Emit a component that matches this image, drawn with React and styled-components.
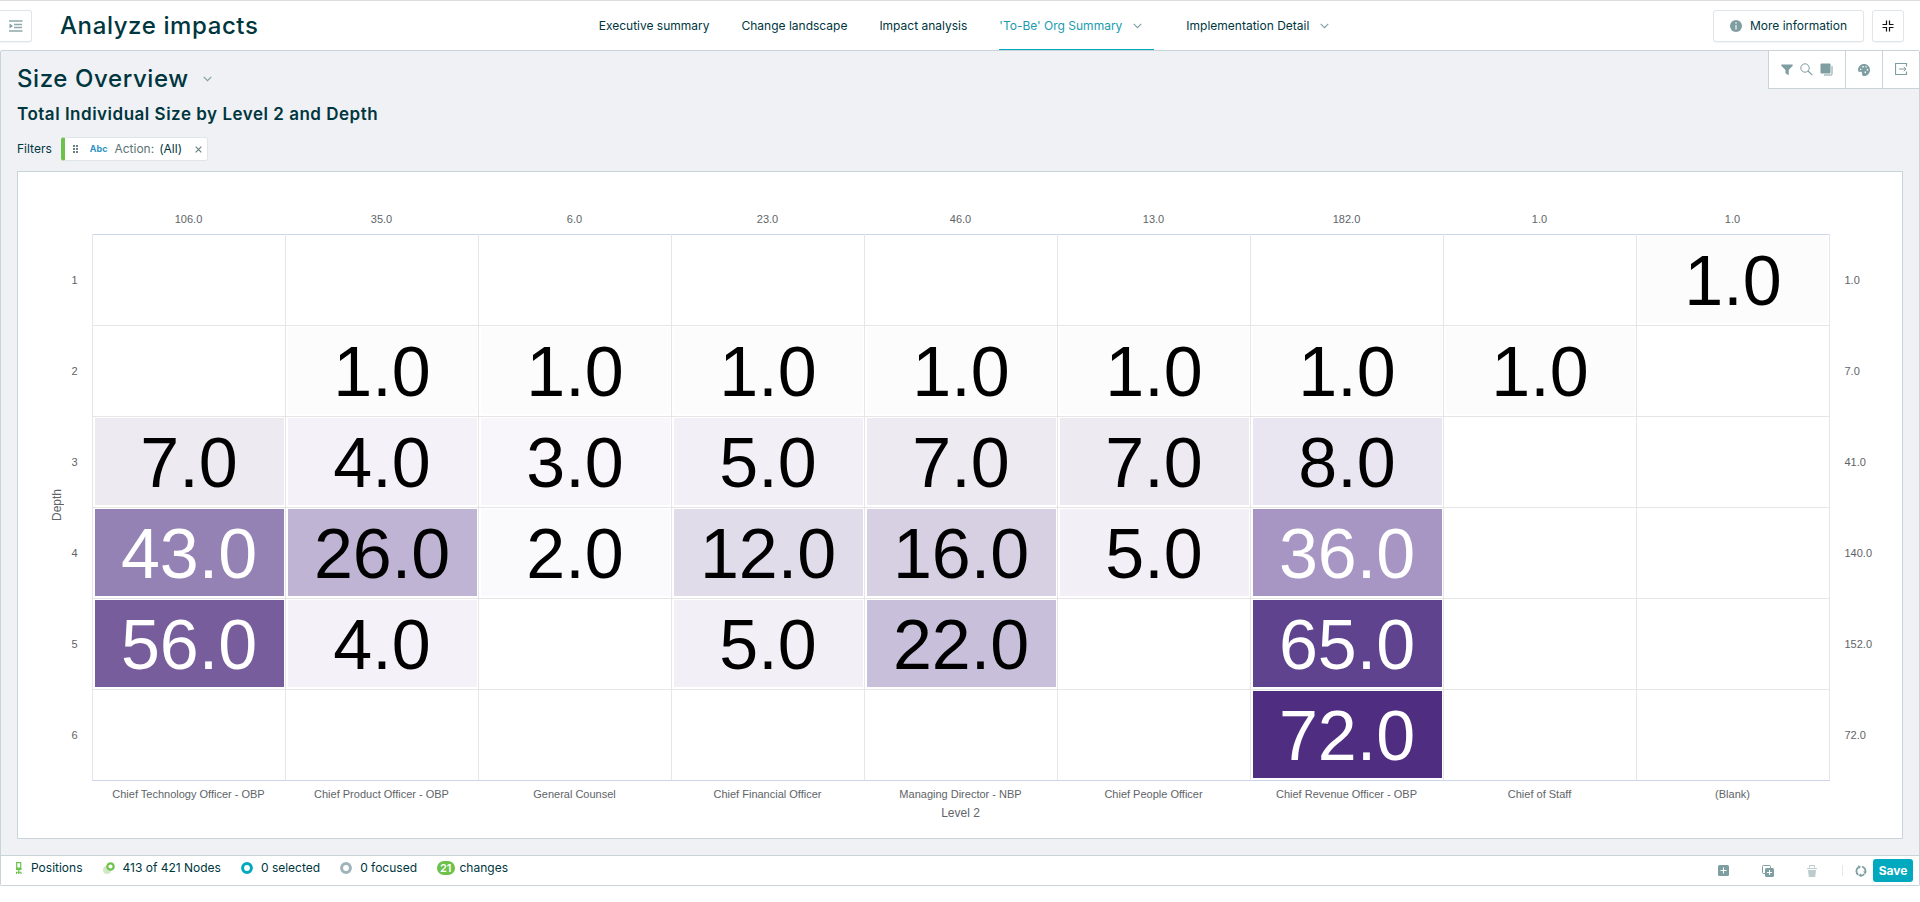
import React from "react";
import styled, { createGlobalStyle } from "styled-components";

const GlobalStyle = createGlobalStyle`
  *, *::before, *::after { box-sizing: border-box; }
  body {
    margin: 0;
    background: #fff;
    color: #00363e;
    font: 400 12px/20px Inter, "Liberation Sans", sans-serif;
  }
  h1, h2, h3, p, ul { margin: 0; padding: 0; }
  button { font: inherit; color: inherit; cursor: pointer; }
`;

const LINE = "#c8d4da";
const ICON = "#7e9ea1";
const TEAL = "#00a9bd";
const GREEN = "#6cc24a";

/* ---------- header ---------- */

const Header = styled.header`
  display: flex;
  align-items: stretch;
  height: 50px;
  padding-right: 16px;
  border-top: 1px solid #dcdcdc;
`;

const HeaderSide = styled.div`
  flex: 1 1 0;
  display: flex;
  align-items: center;
  justify-content: ${(p) => (p.$end ? "flex-end" : "flex-start")};
  gap: ${(p) => (p.$end ? 8 : 28)}px;
`;

const OutlineButton = styled.button`
  display: inline-flex;
  align-items: center;
  justify-content: center;
  gap: 8px;
  height: 32px;
  min-width: 32px;
  padding: ${(p) => (p.$wide ? "0 16px" : "0")};
  background: #fff;
  border: 1px solid #dfe5e8;
  border-radius: 3px;
  box-shadow: 0 1px 1px rgba(0, 40, 50, 0.05);
`;

const MenuToggle = styled(OutlineButton)`
  border-left: 0;
  border-radius: 0 3px 3px 0;
`;

const PageTitle = styled.h1`
  font-size: 24px;
  font-weight: 500;
  line-height: 32px;
  letter-spacing: 0.025em;
  white-space: nowrap;
`;

const Nav = styled.nav`
  display: flex;
  gap: 32px;
  margin-left: 36px;
`;

const NavLink = styled.a`
  display: flex;
  align-items: center;
  gap: 11px;
  padding-top: 2px;
  padding-right: ${(p) => (p.$menu ? 12 : 0)}px;
  border-bottom: 1px solid ${(p) => (p.$active ? TEAL : "transparent")};
  color: ${(p) => (p.$active ? "#1a9bb0" : "inherit")};
  text-decoration: none;
  white-space: nowrap;
`;

/* ---------- workspace ---------- */

const Workspace = styled.main`
  border: 1px solid ${LINE};
  border-radius: 2px;
  background: #f0f1f5;
  box-shadow: 0 1px 0 #e9edf0;
`;

const Top = styled.div`
  display: flex;
  justify-content: space-between;
  align-items: flex-start;
`;

const Headings = styled.div`
  padding: 12px 0 10px 16px;
`;

const ViewTitle = styled.h2`
  display: flex;
  align-items: center;
  gap: 14px;
  font-size: 24px;
  font-weight: 500;
  line-height: 32px;
  letter-spacing: 0.025em;
`;

const PlainButton = styled.button`
  display: inline-flex;
  align-items: center;
  justify-content: center;
  padding: 0;
  border: 0;
  background: none;
`;

const ChartTitle = styled.h3`
  margin-top: 7px;
  font-size: 17px;
  font-weight: 600;
  line-height: 24px;
  letter-spacing: 0.03em;
`;

const Filters = styled.div`
  display: flex;
  align-items: center;
  gap: 9px;
  margin-top: 11px;
`;

const Chip = styled.div`
  display: flex;
  align-items: center;
  height: 24px;
  padding: 0 5px 0 8px;
  background: #fff;
  border: 1px solid #dfe5e8;
  border-left: 4px solid ${GREEN};
  border-radius: 3px;
`;

const ChipType = styled.span`
  margin: 0 7px 0 11px;
  color: #2f93c4;
  font-size: 9px;
  font-weight: 700;
`;

const ChipName = styled.span`
  margin-right: 5px;
  color: #5c7376;
`;

const ChipValue = styled.span`
  margin-right: 13px;
`;

const Tools = styled.div`
  display: flex;
  background: #fff;
  border: solid ${LINE};
  border-width: 0 0 1px 1px;
`;

const ToolGroup = styled.div`
  display: flex;
  align-items: center;
  justify-content: center;
  gap: 7px;
  height: 37px;
  min-width: 37px;
  padding: 0 ${(p) => (p.$wide ? 12 : 0)}px;
  & + & { border-left: 1px solid ${LINE}; }
`;

/* ---------- chart ---------- */

const Card = styled.section`
  margin: 0 16px;
  padding: 34px 0 18px 29px;
  background: #fff;
  border: 1px solid ${LINE};
`;

const Matrix = styled.table`
  width: 100%;
  table-layout: fixed;
  border-collapse: collapse;
  color: #606468;
  font: 400 11px/14px "Liberation Sans", Arial, sans-serif;

  th, td { padding: 0; font-weight: 400; }
`;

const Col = styled.col`
  width: ${(p) => p.$w}px;
`;

const ColumnTotal = styled.td`
  height: 28px;
  && { padding-bottom: 2px; }
  text-align: center;
`;

const ColumnLabel = styled.th`
  height: 26px;
  && { padding-top: 2px; }
  text-align: center;
  white-space: nowrap;
`;

const DepthAxis = styled.th`
  vertical-align: middle;

  span {
    display: inline-block;
    writing-mode: vertical-rl;
    transform: rotate(180deg);
    font-size: 12px;
  }
`;

const LevelAxis = styled.td`
  font-size: 12px;
  text-align: center;
  vertical-align: top;
`;

const RowLabel = styled.th`
  && { padding-right: 14px; }
  text-align: right;
`;

const RowTotal = styled.td`
  && { padding-left: 15px; }
`;

const BodyRow = styled.tr`
  height: 91px;
  &:first-child td[data-cell] { border-top-color: #ccd6eb; }
  &:last-child td[data-cell] { border-bottom-color: #ccd6eb; }
`;

const Cell = styled.td`
  border: 1px solid #e6e6e6;
  && { padding: 1px 1px 2px 2px; }
`;

const Tile = styled.div`
  height: 87px;
  background: ${(p) => p.$fill};
  color: ${(p) => (p.$light ? "#fff" : "#000")};
  font-size: 70px;
  line-height: 90px;
  text-align: center;
`;

const columns = [
  ["Chief Technology Officer - OBP", "106.0"],
  ["Chief Product Officer - OBP", "35.0"],
  ["General Counsel", "6.0"],
  ["Chief Financial Officer", "23.0"],
  ["Managing Director - NBP", "46.0"],
  ["Chief People Officer", "13.0"],
  ["Chief Revenue Officer - OBP", "182.0"],
  ["Chief of Staff", "1.0"],
  ["(Blank)", "1.0"],
];

const rows = [
  { depth: 1, total: "1.0", values: [0, 0, 0, 0, 0, 0, 0, 0, 1] },
  { depth: 2, total: "7.0", values: [0, 1, 1, 1, 1, 1, 1, 1, 0] },
  { depth: 3, total: "41.0", values: [7, 4, 3, 5, 7, 7, 8, 0, 0] },
  { depth: 4, total: "140.0", values: [43, 26, 2, 12, 16, 5, 36, 0, 0] },
  { depth: 5, total: "152.0", values: [56, 4, 0, 5, 22, 0, 65, 0, 0] },
  { depth: 6, total: "72.0", values: [0, 0, 0, 0, 0, 0, 72, 0, 0] },
];

const fills = {
  1: "#fcfcfc", 2: "#fafafc", 3: "#f8f6fb", 4: "#f4f2f8", 5: "#f2f0f6",
  7: "#edeaf2", 8: "#eae6f1", 12: "#e1dcea", 16: "#d7d0e3", 22: "#c8c0da",
  26: "#bfb4d3", 36: "#a796c3", 43: "#9582b5", 56: "#785d9d", 65: "#5f438f",
  72: "#4f2e82",
};

/* ---------- footer ---------- */

const StatusBar = styled.footer`
  display: flex;
  justify-content: space-between;
  align-items: center;
  height: 30px;
  margin-top: 16px;
  padding: 0 6px 0 14px;
  background: #fff;
  border-top: 1px solid ${LINE};
`;

const StatusList = styled.ul`
  display: flex;
  gap: 20px;
  padding-bottom: 5px;
  list-style: none;
`;

const Status = styled.li`
  display: flex;
  align-items: center;
  gap: ${(p) => p.$gap || 8}px;
`;

const Count = styled.span`
  padding: 0 3px;
  border-radius: 8px;
  background: ${GREEN};
  color: #fff;
  font-size: 11px;
  font-weight: 600;
  line-height: 14px;
`;

const Actions = styled.div`
  display: flex;
  align-items: center;
  gap: 33px;
`;

const SaveGroup = styled.div`
  display: flex;
  align-items: center;
  gap: 6px;
  margin-left: -8px;
  padding-left: 13px;
  background: linear-gradient(#e3e8eb, #e3e8eb) left center / 1px 11px no-repeat;
`;

const SaveButton = styled.button`
  width: 40px;
  height: 23px;
  padding: 0;
  border: 0;
  border-radius: 3px;
  background: ${TEAL};
  color: #fff;
  font-weight: 700;
`;

/* ---------- icons ---------- */

const Svg = ({ w = 12, h = w, children }) => (
  <svg width={w} height={h} viewBox={`0 0 ${w} ${h}`} fill="none" aria-hidden="true">
    {children}
  </svg>
);

const Chevron = () => (
  <Svg w={9} h={6}>
    <path d="M.7 .8 4.5 4.7 8.3 .8" stroke={ICON} strokeWidth="1.1" />
  </Svg>
);

const IndentIcon = () => (
  <Svg w={14} h={12}>
    <path d="M0 1h13.500M5 4.500h8M5 7.500h8M0 11h13.500" stroke="#8fa9ab" strokeWidth="1.300" />
    <path d="M.5 3.500v5L4 6z" fill={ICON} />
  </Svg>
);

const InfoIcon = () => (
  <Svg>
    <circle cx="6" cy="6" r="6" fill={ICON} />
    <path d="M5.200 2.300h1.600v1.500H5.200zM5.200 5h1.600v4.500H5.200z" fill="#d6e1e2" />
  </Svg>
);

const CompressIcon = () => (
  <Svg>
    <path d="M4.500 .5v4h-4M7.500 .5v4h4M4.500 11.500v-4h-4M7.500 11.500v-4h4" stroke="#111" strokeWidth="1.200" />
  </Svg>
);

const FilterIcon = () => (
  <Svg w={12}>
    <path d="M.3 .5h11.400v1.200L7.700 6v5.200L4.500 9.300V6L.3 1.700z" fill={ICON} />
  </Svg>
);

const SearchIcon = () => (
  <Svg w={13}>
    <circle cx="5" cy="5" r="4.200" stroke={ICON} />
    <path d="m8 8 4.300 4.200" stroke={ICON} strokeWidth="1.100" />
  </Svg>
);

const LayersIcon = () => (
  <Svg w={13}>
    <rect x=".5" y=".5" width="10" height="10" rx="1" fill={ICON} />
    <path d="M12 3v8.200a.8.8 0 0 1-.8.8H4" stroke={ICON} />
  </Svg>
);

const PaletteIcon = () => (
  <Svg w={12}>
    <path d="M6 .1C2.700 .1 0 2.800 0 6c0 1.500 1 2.100 2.200 1.800 1.300-.3 2 .3 1.800 1.600C3.900 11 4.700 12 6.200 12 9.400 12 12 9.300 12 6S9.300 .1 6 .1z" fill={ICON} />
    <path d="M2 4.700h1.300V6H2zM4.300 2h1.400v1.400H4.300zM7.400 2.200h1.400v1.400H7.400zM8.800 5h1.400v1.400H8.800zM6.600 7.600H8V9H6.600z" fill="#fff" />
  </Svg>
);

const ExportIcon = () => (
  <Svg w={13}>
    <path d="M11.500 3.500v-3H.5v11h11v-3" stroke={ICON} strokeWidth="1.200" />
    <path d="M4 6h7M8.800 3.800 11 6 8.800 8.200" stroke={ICON} />
  </Svg>
);

const GripIcon = () => (
  <Svg w={6} h={8}>
    <path d="M0 0h2v2H0zM3 0h2v2H3zM0 3h2v2H0zM3 3h2v2H3zM0 6h2v2H0zM3 6h2v2H3z" fill="#6d8083" />
  </Svg>
);

const CloseIcon = () => (
  <Svg w={7}>
    <path d="m.7 .7 5.600 5.600M6.300 .7.7 6.300" stroke="#6b8386" strokeWidth="1.200" />
  </Svg>
);

const SeatIcon = () => (
  <Svg w={8} h={12}>
    <path d="M1.700 .6h4v5.400h-4z" stroke={GREEN} strokeWidth="1.200" />
    <path d="M1 6h5.500v2H1zM3.200 8h1.200v4H3.200zM1 9.700h5.500v1H1zM1 10.500h1V12H1zM5.500 10.500h1V12h-1z" fill={GREEN} />
  </Svg>
);

const NodesIcon = () => (
  <Svg w={12}>
    <circle cx="4" cy="8" r="4" fill="#cfe9c4" />
    <circle cx="7.500" cy="4.500" r="3.200" fill="#fff" stroke={GREEN} strokeWidth="2.200" />
  </Svg>
);

const Ring = ({ color }) => (
  <Svg w={12}>
    <circle cx="6" cy="6" r="4.400" stroke={color} strokeWidth="3" />
  </Svg>
);

const AddIcon = () => (
  <Svg w={11}>
    <rect width="11" height="11" rx="1.500" fill={ICON} />
    <path d="M5.500 2.500v6M2.500 5.500h6" stroke="#fff" />
  </Svg>
);

const DuplicateIcon = () => (
  <Svg w={12}>
    <path d="M3 8.500H1.500a1 1 0 0 1-1-1v-6a1 1 0 0 1 1-1h6a1 1 0 0 1 1 1V3" stroke={ICON} />
    <rect x="3" y="3" width="9" height="9" rx="1.500" fill={ICON} />
    <path d="M7.500 5v5M5 7.500h5" stroke="#fff" />
  </Svg>
);

const TrashIcon = () => (
  <Svg w={10} h={12}>
    <path d="M2.500 2.500v-2h5v2M0 3.500h10" stroke="#bccbcd" />
    <path d="M1 5h8l-.8 7H1.800z" fill="#bccbcd" />
  </Svg>
);

const SyncIcon = () => (
  <Svg w={12}>
    <path d="M3.300 9.800A4.500 4.500 0 0 1 3.500 2.300M7 1.600a4.500 4.500 0 0 1 3.300 5.600M9.300 9a4.500 4.500 0 0 1-4 1.500" stroke={ICON} strokeWidth="1.800" />
    <path d="M2.800 .3 6 1.500 3.800 4.200zM8.200 6.600h3.600l-1.600 3zM6.200 8.300V12L3.200 10.400z" fill={ICON} />
  </Svg>
);

/* ---------- page ---------- */

export default function App() {
  return (
    <>
      <GlobalStyle />
      <Header>
        <HeaderSide>
          <MenuToggle type="button" aria-label="Toggle menu"><IndentIcon /></MenuToggle>
          <PageTitle>Analyze impacts</PageTitle>
        </HeaderSide>
        <Nav>
          <NavLink href="#executive">Executive summary</NavLink>
          <NavLink href="#landscape">Change landscape</NavLink>
          <NavLink href="#impact">Impact analysis</NavLink>
          <NavLink href="#summary" $menu $active aria-current="page">'To-Be' Org Summary <Chevron /></NavLink>
          <NavLink href="#detail" $menu>Implementation Detail <Chevron /></NavLink>
        </Nav>
        <HeaderSide $end>
          <OutlineButton type="button" $wide><InfoIcon />More information</OutlineButton>
          <OutlineButton type="button" aria-label="Exit full screen"><CompressIcon /></OutlineButton>
        </HeaderSide>
      </Header>

      <Workspace>
        <Top>
          <Headings>
            <ViewTitle>
              Size Overview
              <PlainButton type="button" aria-label="Choose view"><Chevron /></PlainButton>
            </ViewTitle>
            <ChartTitle>Total Individual Size by Level 2 and Depth</ChartTitle>
            <Filters>
              <span>Filters</span>
              <Chip>
                <GripIcon />
                <ChipType>Abc</ChipType>
                <ChipName>Action:</ChipName>
                <ChipValue>(All)</ChipValue>
                <PlainButton type="button" aria-label="Remove filter"><CloseIcon /></PlainButton>
              </Chip>
            </Filters>
          </Headings>
          <Tools>
            <ToolGroup $wide>
              <PlainButton type="button" aria-label="Filter"><FilterIcon /></PlainButton>
              <PlainButton type="button" aria-label="Search"><SearchIcon /></PlainButton>
              <PlainButton type="button" aria-label="Layers"><LayersIcon /></PlainButton>
            </ToolGroup>
            <ToolGroup>
              <PlainButton type="button" aria-label="Colours"><PaletteIcon /></PlainButton>
            </ToolGroup>
            <ToolGroup>
              <PlainButton type="button" aria-label="Export"><ExportIcon /></PlainButton>
            </ToolGroup>
          </Tools>
        </Top>

        <Card>
          <Matrix>
            <colgroup>
              <Col $w={20} />
              <Col $w={25} />
              {columns.map(([name]) => <col key={name} />)}
              <Col $w={73} />
            </colgroup>
            <thead>
              <tr>
                <td colSpan={2} />
                {columns.map(([name, total]) => <ColumnTotal key={name}>{total}</ColumnTotal>)}
                <td />
              </tr>
            </thead>
            <tbody>
              {rows.map((row, i) => (
                <BodyRow key={row.depth}>
                  {i === 0 && <DepthAxis rowSpan={6}><span>Depth</span></DepthAxis>}
                  <RowLabel scope="row">{row.depth}</RowLabel>
                  {row.values.map((v, c) => (
                    <Cell key={columns[c][0]} data-cell>
                      {v > 0 && <Tile $fill={fills[v]} $light={v > 30}>{v.toFixed(1)}</Tile>}
                    </Cell>
                  ))}
                  <RowTotal>{row.total}</RowTotal>
                </BodyRow>
              ))}
            </tbody>
            <tfoot>
              <tr>
                <td colSpan={2} />
                {columns.map(([name]) => <ColumnLabel key={name} scope="col">{name}</ColumnLabel>)}
                <td />
              </tr>
              <tr>
                <td colSpan={2} />
                <LevelAxis colSpan={9}>Level 2</LevelAxis>
                <td />
              </tr>
            </tfoot>
          </Matrix>
        </Card>

        <StatusBar>
          <StatusList>
            <Status><SeatIcon />Positions</Status>
            <Status><NodesIcon />413 of 421 Nodes</Status>
            <Status><Ring color={TEAL} />0 selected</Status>
            <Status><Ring color="#9fb3bb" />0 focused</Status>
            <Status $gap={5}><Count>21</Count>changes</Status>
          </StatusList>
          <Actions>
            <PlainButton type="button" aria-label="Add"><AddIcon /></PlainButton>
            <PlainButton type="button" aria-label="Duplicate"><DuplicateIcon /></PlainButton>
            <PlainButton type="button" aria-label="Delete" disabled><TrashIcon /></PlainButton>
            <SaveGroup>
              <PlainButton type="button" aria-label="Refresh"><SyncIcon /></PlainButton>
              <SaveButton type="button">Save</SaveButton>
            </SaveGroup>
          </Actions>
        </StatusBar>
      </Workspace>
    </>
  );
}
